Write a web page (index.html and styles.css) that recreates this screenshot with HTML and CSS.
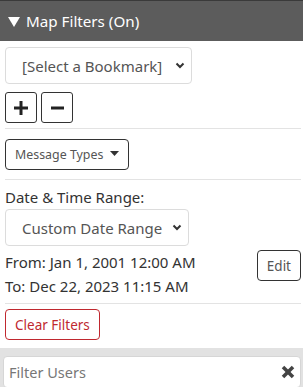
FILE: index.html
```html
<!DOCTYPE html>
<html>
<head>
<meta charset="utf-8">
<link rel="stylesheet" href="styles.css">
</head>
<body>
<div class="header">
  <svg class="tri" width="12" height="10" viewBox="0 0 12 10"><polygon points="0,0 12,0 6,10" fill="#fff"/></svg>
  <span>Map Filters (On)</span>
</div>
<div class="panel">
  <div class="section s1">
    <div class="select sel-bm">
      <span>[Select a Bookmark]</span>
      <svg class="chev" width="10" height="7" viewBox="0 0 10 7"><polyline points="1.5,1.5 5,5 8.5,1.5" fill="none" stroke="#333" stroke-width="2"/></svg>
    </div>
    <div class="btnrow">
      <div class="sqbtn"><svg width="14" height="14" viewBox="0 0 14 14"><rect x="5.5" y="0" width="3" height="14" fill="#222"/><rect x="0" y="5.5" width="14" height="3" fill="#222"/></svg></div>
      <div class="sqbtn"><svg width="13" height="14" viewBox="0 0 13 14"><rect x="0" y="5.5" width="13" height="3" fill="#222"/></svg></div>
    </div>
  </div>
  <div class="section s2">
    <div class="btn dd"><span>Message Types</span><svg class="caret" width="9" height="5" viewBox="0 0 9 5"><polygon points="0,0 9,0 4.5,5" fill="#333"/></svg></div>
  </div>
  <div class="section s3">
    <div class="label">Date &amp; Time Range:</div>
    <div class="select sel-dt">
      <span>Custom Date Range</span>
      <svg class="chev" width="10" height="7" viewBox="0 0 10 7"><polyline points="1.5,1.5 5,5 8.5,1.5" fill="none" stroke="#333" stroke-width="2"/></svg>
    </div>
    <div class="range">
      <div class="dates">
        <div>From: Jan 1, 2001 12:00 AM</div>
        <div>To: Dec 22, 2023 11:15 AM</div>
      </div>
      <div class="btn edit">Edit</div>
    </div>
  </div>
  <div class="section s4">
    <div class="btn clear">Clear Filters</div>
  </div>
</div>
<div class="band">
  <div class="search">
    <span class="ph">Filter Users</span>
    <svg class="x" width="14" height="14" viewBox="0 0 14 14"><line x1="2" y1="2" x2="12" y2="12" stroke="#444" stroke-width="3.6"/><line x1="12" y1="2" x2="2" y2="12" stroke="#444" stroke-width="3.6"/></svg>
  </div>
</div>
</body>
</html>
```
FILE: styles.css
```css
* { box-sizing: border-box; }
body {
  margin: 0;
  font-family: "Noto Sans", "Open Sans", sans-serif;
  font-size: 15px;
  line-height: 24px;
  color: #333;
  background: #fff;
  width: 303px;
  height: 387px;
  overflow: hidden;
  white-space: nowrap;
}
.header {
  height: 41px;
  background: #5c5c5c;
  border-top: 1px solid #3a3a3a;
  color: #fff;
  display: flex;
  align-items: center;
  padding-left: 8px;
  font-size: 15.2px;
  gap: 6px;
}
.tri { margin-top: 1px; }
.panel { padding: 0 2px 0 5px; }
.section { border-bottom: 1px solid #e3e3e3; }
.s1 { padding: 6px 0 5px; display: flex; flex-direction: column; gap: 8px; }
.select {
  height: 37px;
  border: 1px solid #dcdcdc;
  border-radius: 4px;
  display: flex;
  align-items: center;
  justify-content: space-between;
  padding: 0 6px 0 16px;
  color: #555;
}
.sel-bm { width: 187px; }
.sel-dt { width: 184px; }
.btnrow { display: flex; gap: 4px; }
.sqbtn {
  width: 32px; height: 31px;
  border: 1px solid #333;
  border-radius: 3px;
  display: flex; align-items: center; justify-content: center;
}
.btn {
  height: 31px;
  border: 1px solid #333;
  border-radius: 4px;
  display: inline-flex;
  align-items: center;
  font-size: 13.5px;
  color: #555;
}
.s2 { padding: 10px 0 9px; }
.dd { padding: 0 9px 0 9px; gap: 7px; font-size: 12.4px; }
.caret { margin-top: -2px; }
.s3 { padding: 5px 0 5px; }
.range { display: flex; justify-content: space-between; align-items: flex-start; margin-top: 4px; }
.edit { padding: 0 9px; }
.s4 { border-bottom: none; padding: 5px 0 8px; }
.clear { color: #c0282f; border-color: #c0282f; padding: 0 9px; }
.band {
  background: #e2e2e2;
  padding: 8px 2px 0 3px;
  height: 40px;
}
.search {
  height: 32px;
  background: #fff;
  border: 1px solid #d6d6d6;
  border-radius: 4px;
  display: flex;
  align-items: center;
  justify-content: space-between;
  padding: 0 5px 0 5px;
  font-size: 14.5px;
}
.ph { color: #777; }
```
